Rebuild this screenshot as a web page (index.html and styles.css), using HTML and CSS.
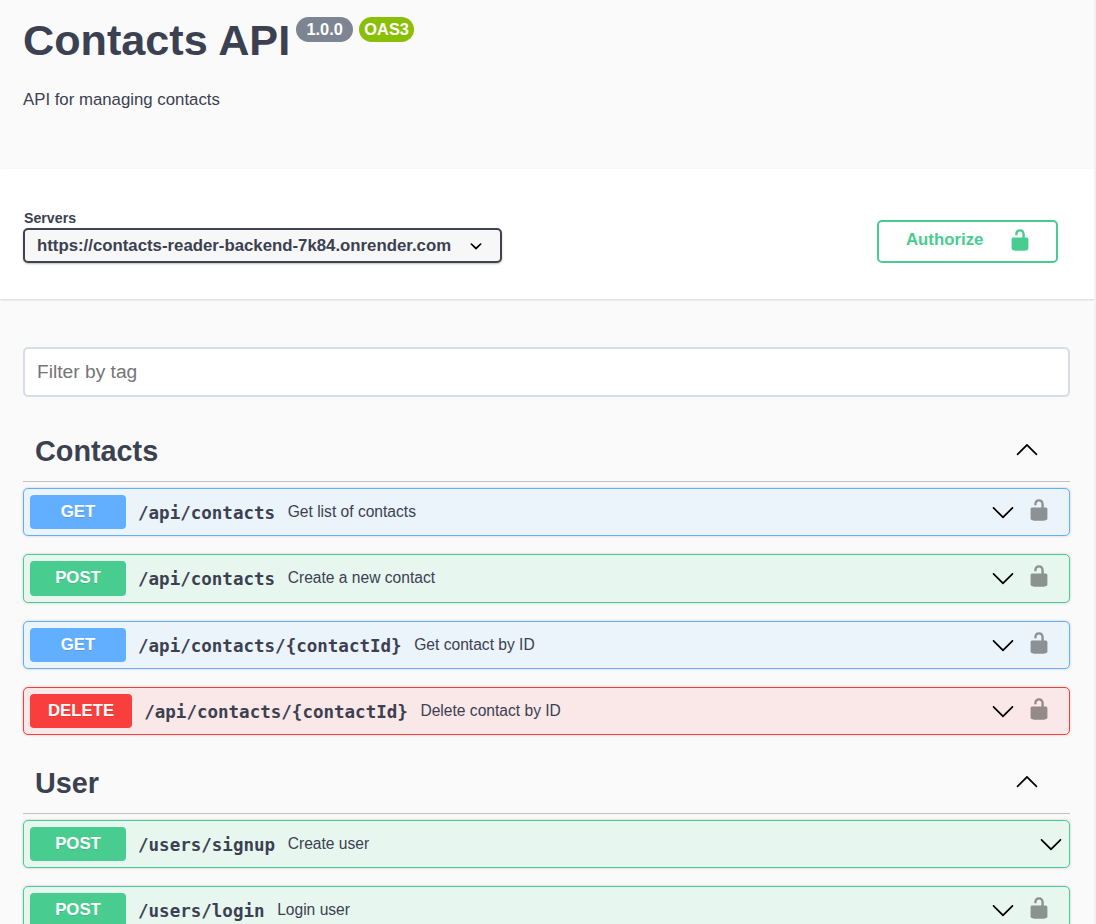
FILE: index.html
```html
<!DOCTYPE html>
<html lang="en">
<head>
<meta charset="utf-8">
<title>Contacts API</title>
<link rel="stylesheet" href="styles.css">
</head>
<body>
<svg class="sprite" aria-hidden="true">
  <symbol id="unlocked" viewBox="0 0 20 20"><path d="M15.8 8H14V5.6C14 2.703 12.665 1 10 1 7.334 1 6 2.703 6 5.6V6h2v-.801C8 3.754 8.797 3 10 3c1.203 0 2 .754 2 2.199V8H4c-.553 0-1 .646-1 1.199V17c0 .549.428 1.139.951 1.307l1.197.387C5.672 18.861 6.55 19 7.1 19h5.8c.549 0 1.428-.139 1.951-.307l1.196-.387c.524-.167.953-.757.953-1.306V9.199C17 8.646 16.352 8 15.8 8z"/></symbol>
  <symbol id="arrow-up" viewBox="0 0 20 20"><path d="M17.418 14.908c.272.268.709.268.979 0s.271-.701 0-.969l-7.908-7.807c-.27-.268-.707-.268-.979 0l-7.908 7.807c-.27.268-.27.701 0 .969.271.268.709.268.979 0L10 7.767l7.418 7.141z"/></symbol>
  <symbol id="arrow-down" viewBox="0 0 20 20"><path d="M17.418 6.109c.272-.268.709-.268.979 0s.271.701 0 .969l-7.908 7.83c-.27.268-.707.268-.979 0l-7.908-7.83c-.27-.268-.27-.701 0-.969.271-.268.709-.268.979 0L10 13.25l7.418-7.141z"/></symbol>
  <symbol id="select-arrow" viewBox="0 0 20 20"><path d="M13.418 7.859a.695.695 0 01.978 0 .68.68 0 010 .969l-3.908 3.83a.697.697 0 01-.979 0l-3.908-3.83a.68.68 0 010-.969.695.695 0 01.978 0L10 11l3.418-3.141z"/></symbol>
</svg>
<div class="page">
  <header class="info">
    <h1 class="title">Contacts API</h1>
    <span class="badges"><span class="badge version">1.0.0</span><span class="badge oas">OAS3</span></span>
    <p class="description">API for managing contacts</p>
  </header>

  <section class="schemes">
    <div class="servers">
      <span class="servers-title">Servers</span>
      <div class="select"><span>https://contacts-reader-backend-7k84.onrender.com</span><svg class="icon"><use href="#select-arrow"/></svg></div>
    </div>
    <button class="authorize"><span>Authorize</span><svg class="icon"><use href="#unlocked"/></svg></button>
  </section>

  <main class="content">
    <input class="filter" type="text" placeholder="Filter by tag">

    <section class="tag">
      <div class="tag-head"><h2>Contacts</h2><svg class="icon"><use href="#arrow-up"/></svg></div>
      <div class="op get"><span class="method">GET</span><span class="path">/api/contacts</span><span class="summary">Get list of contacts</span><svg class="icon arrow"><use href="#arrow-down"/></svg><svg class="icon lock"><use href="#unlocked"/></svg></div>
      <div class="op post"><span class="method">POST</span><span class="path">/api/contacts</span><span class="summary">Create a new contact</span><svg class="icon arrow"><use href="#arrow-down"/></svg><svg class="icon lock"><use href="#unlocked"/></svg></div>
      <div class="op get"><span class="method">GET</span><span class="path">/api/contacts/{contactId}</span><span class="summary">Get contact by ID</span><svg class="icon arrow"><use href="#arrow-down"/></svg><svg class="icon lock"><use href="#unlocked"/></svg></div>
      <div class="op delete"><span class="method">DELETE</span><span class="path">/api/contacts/{contactId}</span><span class="summary">Delete contact by ID</span><svg class="icon arrow"><use href="#arrow-down"/></svg><svg class="icon lock"><use href="#unlocked"/></svg></div>
    </section>

    <section class="tag">
      <div class="tag-head"><h2>User</h2><svg class="icon"><use href="#arrow-up"/></svg></div>
      <div class="op post public"><span class="method">POST</span><span class="path">/users/signup</span><span class="summary">Create user</span><svg class="icon arrow"><use href="#arrow-down"/></svg></div>
      <div class="op post"><span class="method">POST</span><span class="path">/users/login</span><span class="summary">Login user</span><svg class="icon arrow"><use href="#arrow-down"/></svg><svg class="icon lock"><use href="#unlocked"/></svg></div>
    </section>
  </main>
</div>
</body>
</html>
```

FILE: styles.css
```css
* { box-sizing: border-box; }
body {
  margin: 0;
  height: 924px;
  overflow: hidden;
  background: #f1f1f1;
  color: #3b4151;
  font-family: "Liberation Sans", Arial, sans-serif;
}
.sprite { display: none; }
.icon { display: block; flex: none; width: 24px; height: 24px; }
.page { width: 1094px; height: 924px; overflow: hidden; background: #fafafa; }

.info {
  height: 169px;
  padding: 16px 23px 0;
  display: grid;
  grid-template-columns: max-content 1fr;
  grid-template-rows: 50px auto;
  column-gap: 6px;
}
.title { margin: 0; font-size: 43.2px; line-height: 49px; font-weight: 700; }
.badges { display: flex; gap: 6px; padding-top: 1px; }
.badge {
  height: 25px;
  border-radius: 13px;
  color: #fff;
  font-size: 16.4px;
  line-height: 25px;
  font-weight: 700;
  text-align: center;
}
.version { width: 57px; background: #7d8492; }
.oas { width: 55px; background: #89bf04; }
.description { grid-column: 1 / 3; margin: 24px 0 0; font-size: 16.8px; line-height: 20px; }

.schemes {
  display: flex;
  justify-content: space-between;
  align-items: flex-start;
  height: 130px;
  padding: 41px 36px 0 23px;
  background: #fff;
  box-shadow: 0 1px 2px rgba(0, 0, 0, .15);
}
.servers-title { display: block; padding-left: 1px; font-size: 14.2px; line-height: 17px; font-weight: 700; }
.select {
  display: flex;
  align-items: center;
  width: 479px;
  height: 35px;
  margin-top: 1px;
  padding-left: 12px;
  border: 2px solid #41444e;
  border-radius: 5px;
  background: #f7f7f7;
  box-shadow: 0 1px 2px rgba(0, 0, 0, .25);
  font-size: 16.8px;
  font-weight: 700;
}
.select .icon { margin-left: 13px; }
.authorize {
  display: flex;
  width: 181px;
  height: 43px;
  margin-top: 10px;
  padding: 6px 0 0 27px;
  border: 2px solid #49cc90;
  border-radius: 5px;
  background: transparent;
  color: #49cc90;
  fill: #49cc90;
  font: 700 16.8px/24px "Liberation Sans", Arial, sans-serif;
}
.authorize .icon { margin-left: 25px; }

.content { padding: 48px 24px 0 23px; }
.filter {
  display: block;
  width: 100%;
  height: 50px;
  padding: 0 12px;
  border: 2px solid #d8dde7;
  border-radius: 5px;
  background: #fff;
  font: 19.2px "Liberation Sans", Arial, sans-serif;
}
.filter::placeholder { color: #757575; }
.tag { padding-top: 23px; }
.tag + .tag { padding-top: 0; }
.tag-head {
  display: flex;
  justify-content: space-between;
  height: 61.9px;
  margin-bottom: 6px;
  padding: 14px 31px 0 12px;
  border-bottom: 1px solid rgba(59, 65, 81, .3);
}
.tag-head h2 { margin: 0; font-size: 28.8px; line-height: 34px; }
.tag + .tag .tag-head { height: 60.8px; padding-top: 13px; }
.tag-head .icon { margin-top: 3px; }

.op {
  display: flex;
  align-items: center;
  height: 48.33px;
  margin-bottom: 18px;
  padding: 0 18px 0 6px;
  border: 1px solid var(--tone);
  border-radius: 5px;
  background: var(--tint);
  box-shadow: 0 0 3px rgba(0, 0, 0, .19);
}
.get { --tone: #61affe; --tint: #ebf3fb; }
.post { --tone: #49cc90; --tint: #e8f6f0; }
.delete { --tone: #f93e3e; --tint: #fae7e7; }
.method {
  min-width: 96px;
  height: 34.4px;
  padding: 0 18px;
  border-radius: 4px;
  background: var(--tone);
  color: #fff;
  font-size: 16.8px;
  line-height: 33px;
  font-weight: 700;
  text-align: center;
  text-shadow: 0 1px 0 rgba(0, 0, 0, .1);
}
.path {
  padding: 2px 12.6px 0 12px;
  font: 700 17.53px/22px "DejaVu Sans Mono", monospace;
}
.summary { flex: 1; font-size: 15.6px; }
.lock { margin: -4px 0 0 12px; fill: #000; opacity: .4; }
.public { padding-right: 6px; }
```
